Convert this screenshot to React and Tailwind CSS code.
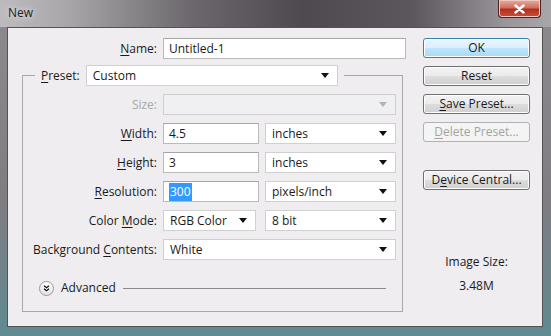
import clsx from 'clsx';

function Btn({ children, primary, disabled }) {
  return (
    <button
      className={clsx(
        'h-[20px] w-[107px] rounded-[3px] border text-[12px] leading-none',
        primary &&
          'border-[#3c7fb1] bg-[linear-gradient(#eaf6fd_0%,#d9f0fc_50%,#bee6fd_51%,#a7d9f5_100%)] text-[#1a1a1a] shadow-[inset_0_0_0_1px_#ffffff]',
        !primary && !disabled &&
          'border-[#707070] bg-[linear-gradient(#f2f2f2_0%,#ebebeb_50%,#dddddd_51%,#cfcfcf_100%)] text-[#1a1a1a] shadow-[inset_0_0_0_1px_#fcfcfc]',
        disabled && 'border-[#adb2b5] bg-[#f4f4f4] text-[#a3a3a3]'
      )}
    >
      {children}
    </button>
  );
}

function Caret({ dim }) {
  return (
    <svg width="8" height="5" viewBox="0 0 8 5" className="shrink-0">
      <path d="M0 0h8L4 5z" fill={dim ? '#b4b4b4' : '#111111'} />
    </svg>
  );
}

function Select({ w, value, disabled }) {
  return (
    <div
      className={clsx(
        'flex h-[21px] items-center justify-between border pl-[6px] pr-[8px]',
        w,
        disabled ? 'border-[#cfcfcf] bg-[#f0eff1]' : 'border-[#d0d0d0] bg-white'
      )}
    >
      <span>{value}</span>
      <Caret dim={disabled} />
    </div>
  );
}

function Input({ w, children }) {
  return (
    <div className={clsx('flex h-[21px] items-center border border-[#b9b9b9] border-t-[#a6a6a6] bg-white pl-[5px]', w)}>
      {children}
    </div>
  );
}

function Label({ w, children, dim }) {
  return (
    <div className={clsx('shrink-0 text-right', w, dim ? 'text-[#a8a8a8]' : 'text-[#1a1a1a]')}>{children}</div>
  );
}

function U({ children }) {
  return <span className="underline underline-offset-2">{children}</span>;
}

export default function App() {
  return (
    <div className="flex h-[336px] w-[551px] flex-col bg-[linear-gradient(#8e8b8f_0%,#7f7d82_60%,#5f8b91_100%)] font-['Open_Sans',sans-serif] text-[12px] text-[#1a1a1a]">
      <div className="flex h-[27px] items-start justify-between bg-[linear-gradient(90deg,#bdbbbe_0%,#a9a7aa_12%,#6b676c_35%,#4d494e_55%,#5b575c_75%,#9a969b_92%,#a9a6aa_100%)] pl-[8px] pr-[10px]">
        <span className="mt-[4px] text-[12px] text-[#202020] [text-shadow:0_0_6px_#ffffff]">New</span>
        <div className="flex h-[18px] w-[43px] items-center justify-center rounded-b-[4px] border border-t-0 border-[#4a2220] bg-[linear-gradient(#e6aca0_0%,#cf6f5e_45%,#b5301c_55%,#c5503a_100%)] shadow-[inset_0_0_0_1px_#f0c8c0]">
          <svg width="11" height="10" viewBox="0 0 11 10">
            <path d="M1.5 1.5l8 7M9.5 1.5l-8 7" stroke="#ffffff" strokeWidth="2.4" strokeLinecap="round" />
          </svg>
        </div>
      </div>

      <div className="flex flex-1 pb-[9px] pl-[7px] pr-[8px]">
        <div className="flex flex-1 border border-[#535353] bg-[#efedf0]">
          <div className="flex w-[400px] flex-col pt-[10px]">
            <div className="flex h-[21px] items-center gap-[6px]">
              <Label w="w-[149px]"><U>N</U>ame:</Label>
              <Input w="w-[243px]">Untitled-1</Input>
            </div>

            <fieldset className="ml-[14px] mt-[6px] w-[381px] border border-[#a9a9a9] pb-[15px]">
              <legend className="ml-[12px] px-[6px]">
                <div className="flex items-center gap-[6px]">
                  <span><U>P</U>reset:</span>
                  <Select w="w-[252px]" value="Custom" />
                </div>
              </legend>

              <div className="mt-[8px] flex flex-col gap-[8px]">
                <div className="flex h-[21px] items-center gap-[6px]">
                  <Label w="w-[134px]" dim>Size:</Label>
                  <Select w="w-[233px]" value="" disabled />
                </div>
                <div className="flex h-[21px] items-center gap-[6px]">
                  <Label w="w-[134px]"><U>W</U>idth:</Label>
                  <Input w="w-[96px]">4.5</Input>
                  <Select w="w-[131px]" value="inches" />
                </div>
                <div className="flex h-[21px] items-center gap-[6px]">
                  <Label w="w-[134px]"><U>H</U>eight:</Label>
                  <Input w="w-[96px]">3</Input>
                  <Select w="w-[131px]" value="inches" />
                </div>
                <div className="flex h-[21px] items-center gap-[6px]">
                  <Label w="w-[134px]"><U>R</U>esolution:</Label>
                  <Input w="w-[96px]">
                    <span className="bg-[#3399ff] px-[1px] text-white">300</span>
                  </Input>
                  <Select w="w-[131px]" value="pixels/inch" />
                </div>
                <div className="flex h-[21px] items-center gap-[6px]">
                  <Label w="w-[134px]">Color <U>M</U>ode:</Label>
                  <Select w="w-[93px]" value="RGB Color" />
                  <Select w="ml-[3px] w-[131px]" value="8 bit" />
                </div>
                <div className="flex h-[21px] items-center gap-[6px]">
                  <Label w="w-[134px]">Background <U>C</U>ontents:</Label>
                  <Select w="w-[233px]" value="White" />
                </div>
              </div>

              <div className="ml-[16px] mr-[16px] mt-[20px] flex h-[16px] items-center gap-[7px]">
                <div className="flex h-[15px] w-[15px] items-center justify-center rounded-full border border-[#9a9a9a] bg-[linear-gradient(#ffffff,#e2e2e2)]">
                  <svg width="7" height="7" viewBox="0 0 7 7">
                    <path d="M1 0.8l2.5 2 2.5-2M1 3.8l2.5 2 2.5-2" stroke="#111111" strokeWidth="1.2" fill="none" />
                  </svg>
                </div>
                <span>Advanced</span>
                <div className="h-px flex-1 bg-[#8a8a8a]" />
              </div>
            </fieldset>
          </div>

          <div className="ml-[15px] flex w-[107px] flex-col items-center pt-[10px]">
            <div className="flex flex-col gap-[8px]">
              <Btn primary>OK</Btn>
              <Btn>Reset</Btn>
              <Btn><U>S</U>ave Preset...</Btn>
              <Btn disabled><U>D</U>elete Preset...</Btn>
            </div>
            <div className="mt-[28px]">
              <Btn>D<U>e</U>vice Central...</Btn>
            </div>
            <div className="mt-[63px] text-[#1a1a1a]">Image Size:</div>
            <div className="mt-[6px] text-[#1a1a1a]">3.48M</div>
          </div>
        </div>
      </div>
    </div>
  );
}
